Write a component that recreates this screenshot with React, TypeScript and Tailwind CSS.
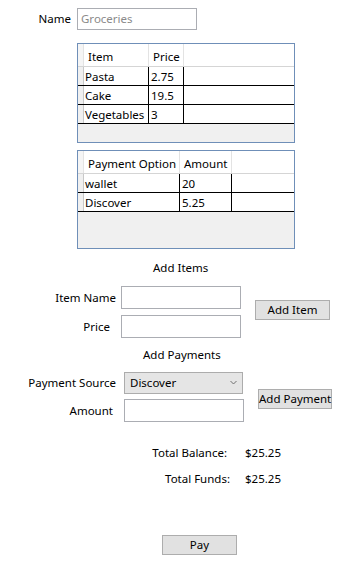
import React from 'react';

const font = { fontFamily: '"Noto Sans", "Open Sans", sans-serif' };

const items = [
  { name: 'Pasta', price: '2.75' },
  { name: 'Cake', price: '19.5' },
  { name: 'Vegetables', price: '3' },
];

const payments = [
  { option: 'wallet', amount: '20' },
  { option: 'Discover', amount: '5.25' },
];

const TextBox: React.FC<{ value?: string; className?: string }> = ({ value, className = '' }) => (
  <div className={`h-[23px] border border-[#abadb3] bg-white px-[3px] leading-[19px] text-[#8a8a8a] ${className}`}>
    {value}
  </div>
);

const Button: React.FC<{ label: string; className?: string }> = ({ label, className = '' }) => (
  <div className={`h-[20px] whitespace-nowrap border border-[#adadad] bg-[#e1e1e1] text-center leading-[18px] text-black ${className}`}>
    {label}
  </div>
);

export default function App() {
  return (
    <div className="relative h-[573px] w-[341px] overflow-hidden bg-white text-[11.5px] text-black" style={font}>
      {/* Name */}
      <div className="mt-[8px] flex items-center">
        <div className="w-[72px] pr-[1px] text-right">Name</div>
        <TextBox value="Groceries" className="ml-[5px] w-[120px] !h-[22px]" />
      </div>

      {/* Items grid */}
      <div className="ml-[77px] mt-[13px] flex h-[100px] w-[218px] flex-col border border-[#6f8fb8] bg-[#f0f0f0]">
        <div className="flex h-[23px] border-b border-[#d5d5d5] bg-white">
          <div className="w-[6px] border-r border-[#e3e3e3] bg-[#f5f5f5]" />
          <div className="w-[65px] border-r border-[#e3e3e3] pl-[4px] pt-[2px] leading-[22px]">Item</div>
          <div className="w-[35px] border-r border-[#e3e3e3] pl-[4px] pt-[2px] leading-[22px]">Price</div>
          <div className="flex-1" />
        </div>
        {items.map((it) => (
          <div key={it.name} className="flex h-[19px] border-b border-black bg-white leading-[20px]">
            <div className="w-[6px] border-r border-[#c8c8c8] bg-[#f0f0f0]" />
            <div className="w-[65px] whitespace-nowrap border-r border-black pl-[1px]">{it.name}</div>
            <div className="w-[35px] border-r border-black pl-[2px]">{it.price}</div>
            <div className="flex-1" />
          </div>
        ))}
      </div>

      {/* Payments grid */}
      <div className="ml-[77px] mt-[7px] flex h-[99px] w-[218px] flex-col border border-[#6f8fb8] bg-[#f0f0f0]">
        <div className="flex h-[23px] border-b border-[#d5d5d5] bg-white">
          <div className="w-[6px] border-r border-[#e3e3e3] bg-[#f5f5f5]" />
          <div className="w-[96px] whitespace-nowrap border-r border-[#e3e3e3] pl-[4px] pt-[2px] leading-[22px]">Payment Option</div>
          <div className="w-[52px] border-r border-[#e3e3e3] pl-[4px] pt-[2px] leading-[22px]">Amount</div>
          <div className="flex-1" />
        </div>
        {payments.map((p) => (
          <div key={p.option} className="flex h-[19px] border-b border-black bg-white leading-[20px]">
            <div className="w-[6px] border-r border-[#c8c8c8] bg-[#f0f0f0]" />
            <div className="w-[96px] border-r border-black pl-[1px]">{p.option}</div>
            <div className="w-[52px] border-r border-black pl-[2px]">{p.amount}</div>
            <div className="flex-1" />
          </div>
        ))}
      </div>

      {/* Add Items */}
      <div className="mt-[11px] ml-[153px] leading-[16px]">Add Items</div>
      <div className="mt-[10px] flex items-start">
        <div className="flex flex-col gap-[6px]">
          <div className="flex items-center">
            <div className="w-[116px] text-right">Item Name</div>
            <TextBox className="ml-[5px] w-[120px]" />
          </div>
          <div className="flex items-center">
            <div className="w-[110px] text-right">Price</div>
            <TextBox className="ml-[11px] w-[120px]" />
          </div>
        </div>
        <Button label="Add Item" className="ml-[14px] mt-[14px] w-[75px]" />
      </div>

      {/* Add Payments */}
      <div className="mt-[9px] ml-[143px] leading-[16px]">Add Payments</div>
      <div className="mt-[9px] flex items-start">
        <div className="flex flex-col gap-[5px]">
          <div className="flex items-center">
            <div className="w-[116px] whitespace-nowrap text-right">Payment Source</div>
            <div className="ml-[8px] flex h-[22px] w-[119px] items-center justify-between border border-[#acacac] bg-[#e5e5e5] pl-[5px] pr-[5px] leading-[20px]">
              <span>Discover</span>
              <svg width="7" height="5" viewBox="0 0 7 5" className="mb-[2px]">
                <path d="M0.5 1 L3.5 4 L6.5 1" fill="none" stroke="#707070" strokeWidth="1" />
              </svg>
            </div>
          </div>
          <div className="flex items-center">
            <div className="w-[113px] text-right">Amount</div>
            <TextBox className="ml-[11px] w-[120px]" />
          </div>
        </div>
        <Button label="Add Payment" className="ml-[14px] mt-[17px] w-[74px]" />
      </div>

      {/* Totals */}
      <div className="mt-[23px] flex leading-[16px]">
        <div className="w-[227px] text-right">Total Balance:</div>
        <div className="ml-[18px]">$25.25</div>
      </div>
      <div className="mt-[10px] flex leading-[16px]">
        <div className="w-[230px] text-right">Total Funds:</div>
        <div className="ml-[15px]">$25.25</div>
      </div>

      <Button label="Pay" className="ml-[162px] mt-[48px] w-[75px]" />
    </div>
  );
}
